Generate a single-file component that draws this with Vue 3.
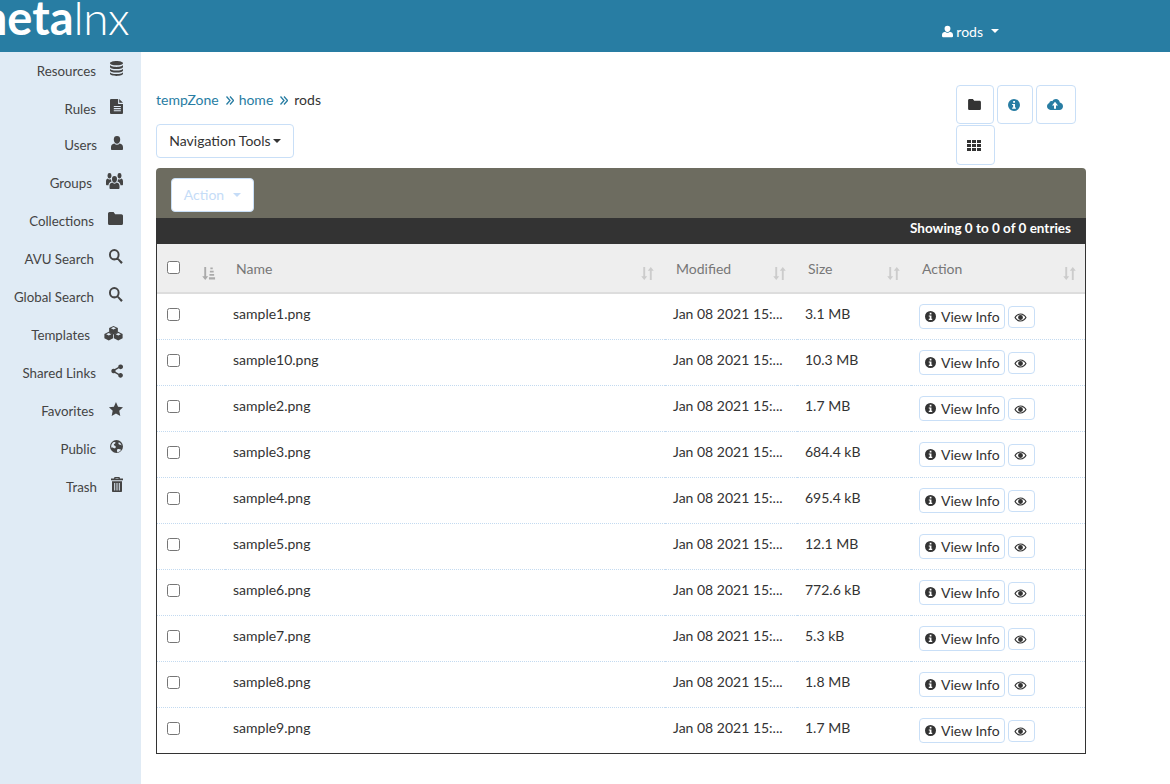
<script setup>
const icons = {
  database: 'M8 1C4.7 1 2 1.9 2 3s2.7 2 6 2 6-.9 6-2-2.7-2-6-2z M2 4.600v1.900c0 1.100 2.700 2 6 2s6-.9 6-2V4.600c0 1.100-2.700 2-6 2s-6-.9-6-2z M2 7.900v1.900c0 1.100 2.700 2 6 2s6-.9 6-2V7.900c0 1.100-2.700 2-6 2s-6-.9-6-2z M2 11.200V13c0 1.100 2.700 2 6 2s6-.9 6-2v-1.800c0 1.100-2.700 2-6 2s-6-.9-6-2z',
  file: 'M2.500 1H9v4.600h4.500V14a1 1 0 0 1-1 1h-10a1 1 0 0 1-1-1V2a1 1 0 0 1 1-1z M10 1l3.500 3.600H10z M5 7.500v1h6.500v-1z M5 9.500v1h6.500v-1z M5 11.500v1h6.500v-1z',
  user: 'M8 2a3.200 3.200 0 0 1 3.200 3.300C11.200 7.200 9.800 9 8 9S4.800 7.200 4.800 5.300A3.200 3.200 0 0 1 8 2z M5.400 8.600C6.100 9.400 7 9.800 8 9.800s1.900-.4 2.600-1.200C12.800 9 14 10 14 12v1.500c0 .5-.5 1-1 1H3c-.5 0-1-.5-1-1V12c0-2 1.200-3 3.400-3.400z',
  group: 'M8.500 4.500a2.500 2.500 0 0 1 2.500 2.600c0 1.500-1.100 2.900-2.500 2.900S6 8.600 6 7.100a2.500 2.500 0 0 1 2.500-2.600z M6.300 9.800c.6.600 1.400.9 2.200.9s1.600-.3 2.200-.9c1.700.3 2.800 1.100 2.800 2.700v1.700c0 .4-.4.800-.8.800H4.300c-.4 0-.8-.4-.8-.8v-1.700c0-1.600 1.100-2.400 2.800-2.700z M3.500 2A2 2 0 0 1 5.500 4C5.500 5.300 4.600 6.500 3.500 6.500S1.500 5.300 1.500 4a2 2 0 0 1 2-2z M13.500 2a2 2 0 0 1 2 2c0 1.300-.9 2.500-2 2.500s-2-1.200-2-2.500a2 2 0 0 1 2-2z M1.700 6.500c.5.500 1.100.8 1.800.8.600 0 1.100-.2 1.500-.5 0 .7.200 1.500.6 2.100-1.900.5-3.100 1.500-3.100 3.100H.6c-.3 0-.6-.3-.6-.6V8.900c0-1.300.5-2 1.700-2.400z M15.300 6.500c-.5.500-1.100.8-1.800.8-.6 0-1.100-.2-1.500-.5 0 .7-.2 1.500-.6 2.100 1.900.5 3.100 1.500 3.100 3.100h1.900c.3 0 .6-.3.6-.6V8.900c0-1.300-.5-2-1.700-2.400z',
  folder: 'M1 3.500C1 2.700 1.700 2 2.500 2h3.700l1.500 2h5.800c.8 0 1.500.7 1.500 1.500v7c0 .8-.7 1.500-1.500 1.500h-11C1.700 14 1 13.300 1 12.500z',
  search: 'M6.500 1a5.500 5.500 0 1 1 0 11 5.500 5.500 0 0 1 0-11z M6.500 3a3.500 3.500 0 1 0 0 7 3.500 3.500 0 0 0 0-7z M10 9.200l5.300 4.500-1.700 1.800-4.600-5.100z',
  share: 'M12.500 1a2.500 2.500 0 1 1-1.900 4.100L6.900 7.100a2.600 2.600 0 0 1 0 1.800l3.700 2a2.500 2.500 0 1 1-.7 1.300L6.100 10.200a2.500 2.500 0 1 1 0-4.400l3.800-2A2.500 2.500 0 0 1 12.500 1z',
  star: 'M8 .8l2.200 4.900 5.300.6-4 3.600 1.100 5.300L8 12.500l-4.600 2.700 1.100-5.300-4-3.600 5.300-.6z',
  globe: 'M8 1a7 7 0 1 1 0 14A7 7 0 0 1 8 1z M5 3.200C3.300 4.200 2.300 6 2.300 8c0 .5.1 1 .2 1.400.6-.6 1.500-.3 2.300.1.800.5 1.700.5 2.200-.2.500-.8.200-1.800-.7-2.200-.8-.3-1.400-.5-1.100-1.300.3-.7 1.200-.9 1.700-1.600C7.300 3.500 6 2.800 5 3.200z M10.500 3.300c-.4.700-.6 1.600 0 2.200.7.600 1.600.3 2.400.8.600.4.800 1 .7 1.700C13.700 6 12.500 4.200 10.500 3.300z M9 11c-.7.600-.6 1.800-.1 3.100C10.500 13.900 12 13 13 11.500 11.500 10.500 10 10.300 9 11z',
  trash: 'M5.500 1h5l.5 1.500h3V4H2V2.500h3z M6.500 2v.5h3V2z M3 5h10v9c0 .6-.4 1-1 1H4c-.6 0-1-.4-1-1z M5.200 6.500v7h1v-7z M7.500 6.500v7h1v-7z M9.800 6.500v7h1v-7z',
  info: 'M8 1a7 7 0 1 1 0 14A7 7 0 0 1 8 1z M7 3.200v2.300h2.200V3.200z M5.800 6.700v1.300h1.200v3H5.800v1.400h4.400V11H9.200V6.700z',
  cloud: 'M9 2.500c2 0 3.500 1.300 3.800 3.100 1.700.2 3.200 1.500 3.200 3.400 0 2-1.600 3.500-3.500 3.500h-9C1.600 12.500 0 11.100 0 9.200 0 7.700 1 6.500 2.300 6.100 2.400 5 3.300 4.300 4.400 4.300c.4 0 .7.1 1 .2C6 3.300 7.400 2.500 9 2.500z M8 5l-3 3.300h2v3h2v-3h2z',
  th: 'M1 2h4v3.300H1z M6 2h4v3.300H6z M11 2h4v3.300h-4z M1 6.300h4v3.400H1z M6 6.300h4v3.400H6z M11 6.300h4v3.400h-4z M1 10.700h4V14H1z M6 10.700h4V14H6z M11 10.700h4V14h-4z',
  eye: 'M8 3C4.500 3 1.700 5.600.5 8c1.200 2.400 4 5 7.500 5s6.300-2.600 7.500-5C14.300 5.600 11.500 3 8 3z M8 4.400C5.500 4.400 3.300 6.100 2.100 8 3.300 9.900 5.500 11.600 8 11.600s4.700-1.700 5.900-3.600C12.700 6.100 10.500 4.400 8 4.400z M8 5a3 3 0 1 1 0 6 3 3 0 0 1 0-6z',
  sortAlpha: 'M3.500 1h2v10h2.200L4.500 15 1.300 11h2.200z M10 1.500h2.500v2H10z M9.500 5h4v2h-4z M9 8.500h5v2H9z M8.500 12h6.500v2.500H8.500z',
  sort: 'M3.500 1h2v10h2.200L4.500 15 1.300 11h2.200z M11.500 1l3.200 4h-2.200v10h-2V5H8.300z'
}
const boxes = {
  database: ['2 1 12 14', 13, 15],
  file: ['1.500 1 12 14', 13, 15],
  user: ['2 2 12 12.500', 12, 14],
  group: ['0 2 17 13', 17, 16],
  folder: ['1 2 14 12', 15, 13],
  search: ['0 1 15.500 14.500', 15, 15],
  share: ['1 .5 14 15', 13, 14],
  star: ['-.5 .8 16 14.400', 15, 14],
  globe: ['1 1 14 14', 13, 13],
  trash: ['2 1 12 14', 12, 15]
}
const menu = [
  { label: 'Resources', icon: 'database' },
  { label: 'Rules', icon: 'file' },
  { label: 'Users', icon: 'user', tight: true },
  { label: 'Groups', icon: 'group' },
  { label: 'Collections', icon: 'folder' },
  { label: 'AVU Search', icon: 'search' },
  { label: 'Global Search', icon: 'search' },
  { label: 'Templates', icon: 'cubes' },
  { label: 'Shared Links', icon: 'share' },
  { label: 'Favorites', icon: 'star' },
  { label: 'Public', icon: 'globe' },
  { label: 'Trash', icon: 'trash' }
]
const files = [
  ['sample1.png', '3.1 MB'], ['sample10.png', '10.3 MB'], ['sample2.png', '1.7 MB'],
  ['sample3.png', '684.4 kB'], ['sample4.png', '695.4 kB'], ['sample5.png', '12.1 MB'],
  ['sample6.png', '772.6 kB'], ['sample7.png', '5.3 kB'], ['sample8.png', '1.8 MB'],
  ['sample9.png', '1.7 MB']
]
</script>

<template>
  <div class="page">
    <header class="topbar">
      <div class="logo"><b>meta</b><span>lnx</span></div>
      <div class="account">
        <svg class="ic-user" viewBox="2 2 12 12.500"><path :d="icons.user" /></svg>
        <span>rods</span>
        <i class="caret caret-user"></i>
      </div>
    </header>
    <div class="body">
      <nav class="side">
        <a v-for="m in menu" :key="m.label" class="side-item" :class="{ tight: m.tight }">
          <span>{{ m.label }}</span>
          <svg v-if="m.icon === 'cubes'" class="side-ic" viewBox="0 0 20 16" width="19" height="16">
            <path d="M10 .5l4.600 2.300v4.400L10 9.500 5.400 7.200V2.800z M10 1.800L7.300 3.100 10 4.400l2.700-1.300z" fill-rule="evenodd" />
            <path d="M5 6.800l4.600 2.300v4.400L5 15.800.4 13.500V9.100z M5 8.100L2.300 9.400 5 10.700l2.700-1.300z" fill-rule="evenodd" />
            <path d="M15 6.800l4.600 2.300v4.400L15 15.800l-4.600-2.300V9.100z M15 8.100l-2.700 1.300 2.700 1.300 2.700-1.300z" fill-rule="evenodd" />
          </svg>
          <svg v-else class="side-ic" :viewBox="boxes[m.icon][0]" :width="boxes[m.icon][1]" :height="boxes[m.icon][2]" preserveAspectRatio="none">
            <path :d="icons[m.icon]" />
          </svg>
        </a>
      </nav>
      <main class="main">
        <div class="top">
          <div class="left">
            <div class="crumbs">
              <a>tempZone</a>
              <svg class="sep" viewBox="0 0 8 9"><path d="M.5.5L4 4.500.5 8.500 M4 .5l3.500 4-3.500 4" /></svg>
              <a>home</a>
              <svg class="sep" viewBox="0 0 8 9"><path d="M.5.5L4 4.500.5 8.500 M4 .5l3.500 4-3.500 4" /></svg>
              <span class="cur">rods</span>
            </div>
            <button class="btn nav-btn">Navigation Tools<i class="caret caret-dark"></i></button>
          </div>
          <div class="tools">
            <button class="btn tool t1"><svg class="tool-ic" viewBox="1 2 14 12" width="13" height="11"><path :d="icons.folder" /></svg></button>
            <button class="btn tool t2"><svg class="tool-ic blue" viewBox="1 1 14 14" width="12" height="12"><path :d="icons.info" /></svg></button>
            <button class="btn tool t3"><svg class="tool-ic blue" viewBox="0 2.500 16 10" width="16" height="11" preserveAspectRatio="none"><path :d="icons.cloud" /></svg></button>
            <button class="btn tool t4"><svg class="tool-ic" viewBox="1 2 14 12" width="14" height="11" preserveAspectRatio="none"><path :d="icons.th" /></svg></button>
          </div>
        </div>
        <section class="panel">
          <div class="panel-head">
            <button class="btn action">Action<i class="caret caret-light"></i></button>
          </div>
          <div class="panel-info">Showing 0 to 0 of 0 entries</div>
          <div class="table-wrap">
            <table class="tbl">
              <colgroup>
                <col class="c1" /><col class="c2" /><col class="c3" /><col class="c4" /><col class="c5" /><col />
              </colgroup>
              <thead>
                <tr>
                  <th class="th-check"><input type="checkbox" /></th>
                  <th class="th-alpha"><svg viewBox="0 0 16 16" width="15" height="15"><path :d="icons.sortAlpha" /></svg></th>
                  <th>Name<svg class="sort" viewBox="0 0 16 16"><path :d="icons.sort" /></svg></th>
                  <th>Modified<svg class="sort" viewBox="0 0 16 16"><path :d="icons.sort" /></svg></th>
                  <th>Size<svg class="sort" viewBox="0 0 16 16"><path :d="icons.sort" /></svg></th>
                  <th>Action<svg class="sort last" viewBox="0 0 16 16"><path :d="icons.sort" /></svg></th>
                </tr>
              </thead>
              <tbody>
                <tr v-for="f in files" :key="f[0]">
                  <td class="td-check"><input type="checkbox" /></td>
                  <td></td>
                  <td>{{ f[0] }}</td>
                  <td>Jan 08 2021 15:...</td>
                  <td>{{ f[1] }}</td>
                  <td>
                    <button class="btn view"><svg viewBox="1 1 14 14" width="11" height="11"><path :d="icons.info" /></svg>View Info</button><button class="btn eye"><svg viewBox="0 0 16 16" width="13" height="13"><path fill-rule="evenodd" :d="icons.eye" /></svg></button>
                  </td>
                </tr>
              </tbody>
            </table>
          </div>
        </section>
      </main>
    </div>
  </div>
</template>

<style>
html, body { margin: 0; background: #fff; }
</style>

<style scoped>
.page { width: 1170px; height: 784px; overflow: hidden; font-family: Lato, "Open Sans", sans-serif; font-size: 14px; color: #333; }
.topbar { height: 52px; background: #287da3; display: flex; color: #fff; overflow: hidden; }
.logo { margin: -13px 0 0 -32px; height: 60px; font-size: 47px; line-height: 60px; white-space: nowrap; }
.logo b { font-weight: 700; }
.logo span { font-weight: 300; font-size: 46px; letter-spacing: -.5px; }
.account { margin: 0 171px 0 auto; display: flex; align-items: center; height: 62px; font-size: 14px; }
.ic-user { width: 11px; height: 13px; fill: #fff; margin-right: 3px; }
.caret { display: inline-block; width: 0; height: 0; border-style: solid; border-color: transparent; border-width: 4px 4px 0; }
.caret-user { border-top-color: #fff; border-width: 4.500px 4.500px 0; margin-left: 8px; }
.body { display: flex; height: 732px; }
.side { width: 141px; background: #e0ebf5; flex: none; }
.side-item { height: 38px; display: flex; align-items: center; justify-content: flex-end; gap: 14px; padding-right: 18px; color: #444; white-space: nowrap; font-size: 13.300px; }
.side-item.tight { margin-top: -2px; }
.side-ic { fill: #444; flex: none; margin-top: -5px; }
.main { flex: 1; padding: 33px 84px 0 15px; min-width: 0; }
.top { display: flex; justify-content: space-between; height: 83px; }
.left { padding-top: 5px; }
.crumbs { line-height: 20px; height: 20px; display: flex; align-items: center; color: #333; }
.crumbs a { color: #287da3; }
.cur { margin-left: 1px; }
.sep { width: 8px; height: 9px; margin: 0 5px 0 7px; fill: none; stroke: #287da3; stroke-width: 1.300px; }
.btn { font-family: inherit; font-size: 14px; background: #fff; border: 1px solid #c9dff7; border-radius: 4px; color: #333; padding: 0; display: inline-flex; align-items: center; justify-content: center; box-sizing: border-box; }
.nav-btn { width: 138px; height: 34px; margin-top: 14px; padding-bottom: 2px; }
.caret-dark { border-top-color: #333; margin-left: 2px; margin-top: 2px; }
.tools { width: 130px; display: flex; flex-wrap: wrap; column-gap: 3px; row-gap: 1px; align-content: flex-start; }
.tool { height: 40px; }
.t1 { width: 38px; height: 39px; padding-right: 2px; }
.t2 { width: 36px; height: 39px; padding-right: 2px; }
.t3 { width: 40px; height: 39px; padding-right: 3px; }
.t4 { width: 39px; padding-right: 3px; }
.tool-ic { fill: #333; }
.tool-ic.blue { fill: #287da3; }
.panel-head { height: 50px; background: #6d6c60; border-radius: 4px 4px 0 0; padding: 10px 15px; box-sizing: border-box; }
.action { width: 83px; height: 34px; color: #c5dcf7; padding-bottom: 2px; }
.caret-light { border-top-color: #c5dcf7; margin-left: 9px; margin-top: 2px; }
.panel-info { height: 26px; line-height: 21px; background: #333; color: #fff; text-align: right; padding-right: 15px; font-weight: 700; font-size: 13.500px; }
.table-wrap { border: 1px solid #333; border-top: 0; }
.tbl { width: 100%; table-layout: fixed; border-collapse: separate; border-spacing: 0; }
.c1 { width: 33px; }
.c2 { width: 35px; }
.c3 { width: 440px; }
.c4 { width: 132px; }
.c5 { width: 114px; }
th { position: relative; box-sizing: border-box; height: 50px; background: #eee; border-bottom: 2px solid #ddd; color: #777; font-weight: 400; text-align: left; padding: 0 0 0 11px; }
tbody td { box-sizing: border-box; height: 46px; padding: 10px 0 0 8px; line-height: 20px; vertical-align: top; border-bottom: 1px dotted #c3daf0; white-space: nowrap; }
tbody tr:last-child td { border-bottom: 0; height: 45px; }
th input, td input { margin: 0; display: block; }
.th-check { padding: 0 0 1px 10px; }
tbody .td-check { padding: 14px 0 0 10px; }
.th-alpha svg { fill: #aaa; position: absolute; left: 11px; top: 22px; }
.sort { position: absolute; right: 10px; top: 22px; width: 15px; height: 15px; fill: #ccc; }
.sort.last { right: 8px; }
.view { width: 86px; height: 25px; gap: 5px; vertical-align: top; justify-content: flex-start; padding: 0 0 1px 5px; }
.view svg { fill: #333; margin-top: 1px; }
.eye { width: 27px; height: 22px; margin: 2px 0 0 3px; padding-right: 2px; vertical-align: top; }
.eye svg { fill: #333; }
</style>
